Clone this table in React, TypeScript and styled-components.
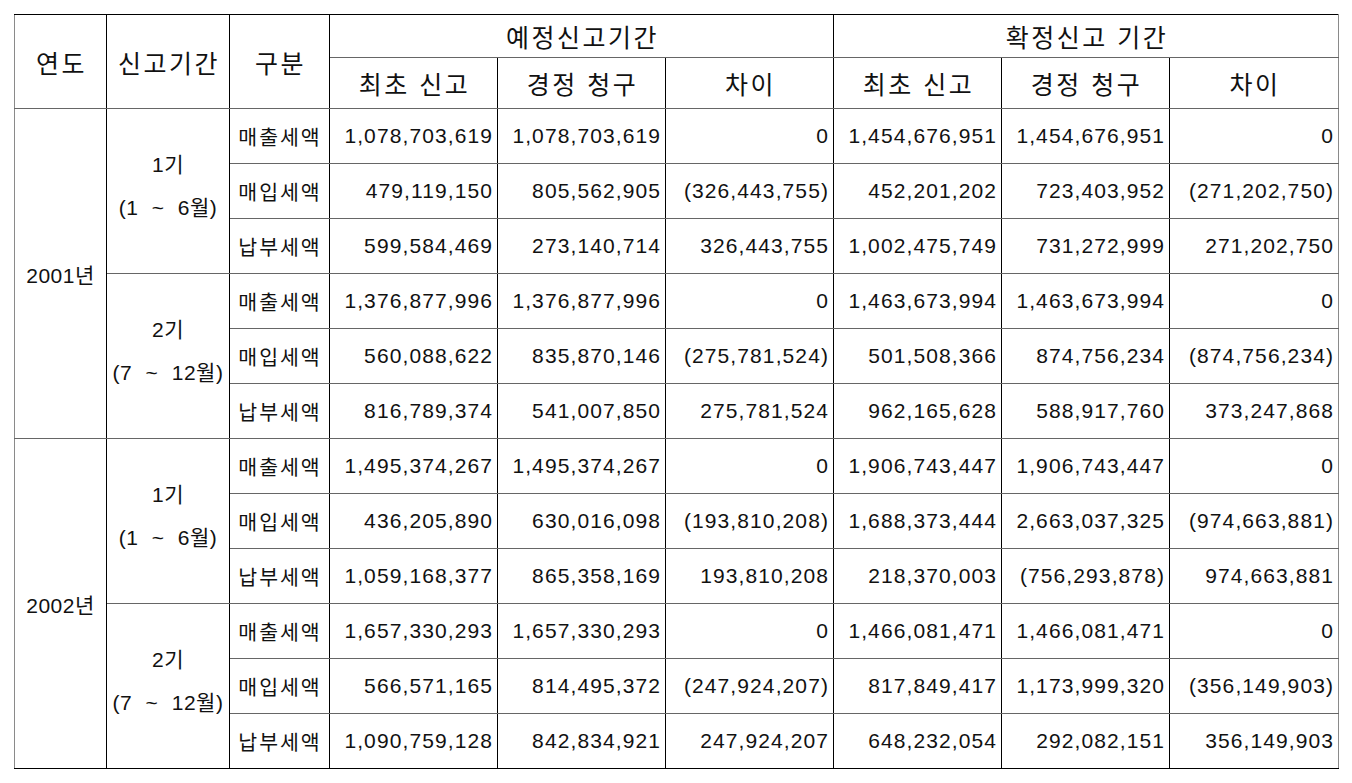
import React from 'react';
import styled, { createGlobalStyle } from 'styled-components';

const GlobalStyle = createGlobalStyle`
  html, body {
    margin: 0;
    padding: 0;
    background: #fff;
  }
  body {
    font-family: "Liberation Sans", "Noto Sans CJK KR", sans-serif;
    color: #111;
  }
`;

const Page = styled.div`
  padding: 14px 0 0 14px;
`;

const Table = styled.table`
  width: 1324px;
  table-layout: fixed;
  border-collapse: collapse;
`;

const HeadRow = styled.tr<{ $h: number }>`
  height: ${(p) => p.$h}px;
`;

const BodyRow = styled.tr`
  height: 55px;
`;

const HeadCell = styled.th<{ $top?: boolean; $first?: boolean; $last?: boolean }>`
  padding: 0 0 0 2px;
  font-weight: 400;
  font-size: 25px;
  letter-spacing: 2.5px;
  text-align: center;
  vertical-align: middle;
  white-space: nowrap;
  border-left: 1px solid ${(p) => (p.$first ? '#8a8a8a' : '#000')};
  border-right: 1px solid ${(p) => (p.$last ? '#8a8a8a' : '#000')};
  border-top: 1px solid ${(p) => (p.$top ? '#000' : '#666')};
  border-bottom: 1px solid #666;
`;

const Cell = styled.td<{ $bottom?: boolean; $first?: boolean; $last?: boolean }>`
  padding: 0;
  vertical-align: middle;
  border-left: 1px solid ${(p) => (p.$first ? '#8a8a8a' : '#000')};
  border-right: 1px solid ${(p) => (p.$last ? '#8a8a8a' : '#000')};
  border-top: 1px solid #666;
  border-bottom: 1px solid ${(p) => (p.$bottom ? '#000' : '#666')};
`;

const YearCell = styled(Cell)`
  text-align: center;
  font-size: 21px;
  letter-spacing: 0.5px;
`;

const PeriodCell = styled(Cell)`
  text-align: center;
  font-size: 21px;
  line-height: 43px;
  word-spacing: 7px;
  letter-spacing: 0.5px;
  padding-bottom: 10px;
  white-space: nowrap;
`;

const KindCell = styled(Cell)`
  text-align: center;
  font-size: 20.5px;
  letter-spacing: 2px;
  padding-left: 1px;
`;

const NumCell = styled(Cell)`
  text-align: right;
  font-size: 21px;
  letter-spacing: 1.1px;
  padding-right: 4px;
  white-space: nowrap;
`;

type Line = { kind: string; values: string[] };
type Period = { label: string; months: string; lines: Line[] };
type Year = { year: string; periods: Period[] };

const data: Year[] = [
  {
    year: '2001년',
    periods: [
      {
        label: '1기',
        months: '(1 ~ 6월)',
        lines: [
          { kind: '매출세액', values: ['1,078,703,619', '1,078,703,619', '0', '1,454,676,951', '1,454,676,951', '0'] },
          { kind: '매입세액', values: ['479,119,150', '805,562,905', '(326,443,755)', '452,201,202', '723,403,952', '(271,202,750)'] },
          { kind: '납부세액', values: ['599,584,469', '273,140,714', '326,443,755', '1,002,475,749', '731,272,999', '271,202,750'] },
        ],
      },
      {
        label: '2기',
        months: '(7 ~ 12월)',
        lines: [
          { kind: '매출세액', values: ['1,376,877,996', '1,376,877,996', '0', '1,463,673,994', '1,463,673,994', '0'] },
          { kind: '매입세액', values: ['560,088,622', '835,870,146', '(275,781,524)', '501,508,366', '874,756,234', '(874,756,234)'] },
          { kind: '납부세액', values: ['816,789,374', '541,007,850', '275,781,524', '962,165,628', '588,917,760', '373,247,868'] },
        ],
      },
    ],
  },
  {
    year: '2002년',
    periods: [
      {
        label: '1기',
        months: '(1 ~ 6월)',
        lines: [
          { kind: '매출세액', values: ['1,495,374,267', '1,495,374,267', '0', '1,906,743,447', '1,906,743,447', '0'] },
          { kind: '매입세액', values: ['436,205,890', '630,016,098', '(193,810,208)', '1,688,373,444', '2,663,037,325', '(974,663,881)'] },
          { kind: '납부세액', values: ['1,059,168,377', '865,358,169', '193,810,208', '218,370,003', '(756,293,878)', '974,663,881'] },
        ],
      },
      {
        label: '2기',
        months: '(7 ~ 12월)',
        lines: [
          { kind: '매출세액', values: ['1,657,330,293', '1,657,330,293', '0', '1,466,081,471', '1,466,081,471', '0'] },
          { kind: '매입세액', values: ['566,571,165', '814,495,372', '(247,924,207)', '817,849,417', '1,173,999,320', '(356,149,903)'] },
          { kind: '납부세액', values: ['1,090,759,128', '842,834,921', '247,924,207', '648,232,054', '292,082,151', '356,149,903'] },
        ],
      },
    ],
  },
];

const colWidths = [92, 123, 100, 168, 168, 168, 168, 168, 169];
const subHeads = ['최초 신고', '경정 청구', '차이', '최초 신고', '경정 청구', '차이'];

const App: React.FC = () => {
  const lastYear = data.length - 1;

  return (
    <Page>
      <GlobalStyle />
      <Table>
        <colgroup>
          {colWidths.map((w, i) => (
            <col key={i} style={{ width: w }} />
          ))}
        </colgroup>
        <thead>
          <HeadRow $h={43}>
            <HeadCell rowSpan={2} $top $first>연도</HeadCell>
            <HeadCell rowSpan={2} $top>신고기간</HeadCell>
            <HeadCell rowSpan={2} $top>구분</HeadCell>
            <HeadCell colSpan={3} $top>예정신고기간</HeadCell>
            <HeadCell colSpan={3} $top $last>확정신고 기간</HeadCell>
          </HeadRow>
          <HeadRow $h={51}>
            {subHeads.map((h, i) => (
              <HeadCell key={i} $last={i === subHeads.length - 1}>
                {h}
              </HeadCell>
            ))}
          </HeadRow>
        </thead>
        <tbody>
          {data.map((y, yi) =>
            y.periods.map((p, pi) =>
              p.lines.map((line, li) => {
                const isBottom = yi === lastYear && pi === y.periods.length - 1 && li === p.lines.length - 1;
                return (
                  <BodyRow key={`${yi}-${pi}-${li}`}>
                    {pi === 0 && li === 0 && (
                      <YearCell rowSpan={6} $first $bottom={yi === lastYear}>
                        {y.year}
                      </YearCell>
                    )}
                    {li === 0 && (
                      <PeriodCell rowSpan={3} $bottom={yi === lastYear && pi === y.periods.length - 1}>
                        <div>{p.label}</div>
                        <div>{p.months}</div>
                      </PeriodCell>
                    )}
                    <KindCell $bottom={isBottom}>{line.kind}</KindCell>
                    {line.values.map((v, vi) => (
                      <NumCell key={vi} $bottom={isBottom} $last={vi === line.values.length - 1}>
                        {v}
                      </NumCell>
                    ))}
                  </BodyRow>
                );
              })
            )
          )}
        </tbody>
      </Table>
    </Page>
  );
};

export default App;
